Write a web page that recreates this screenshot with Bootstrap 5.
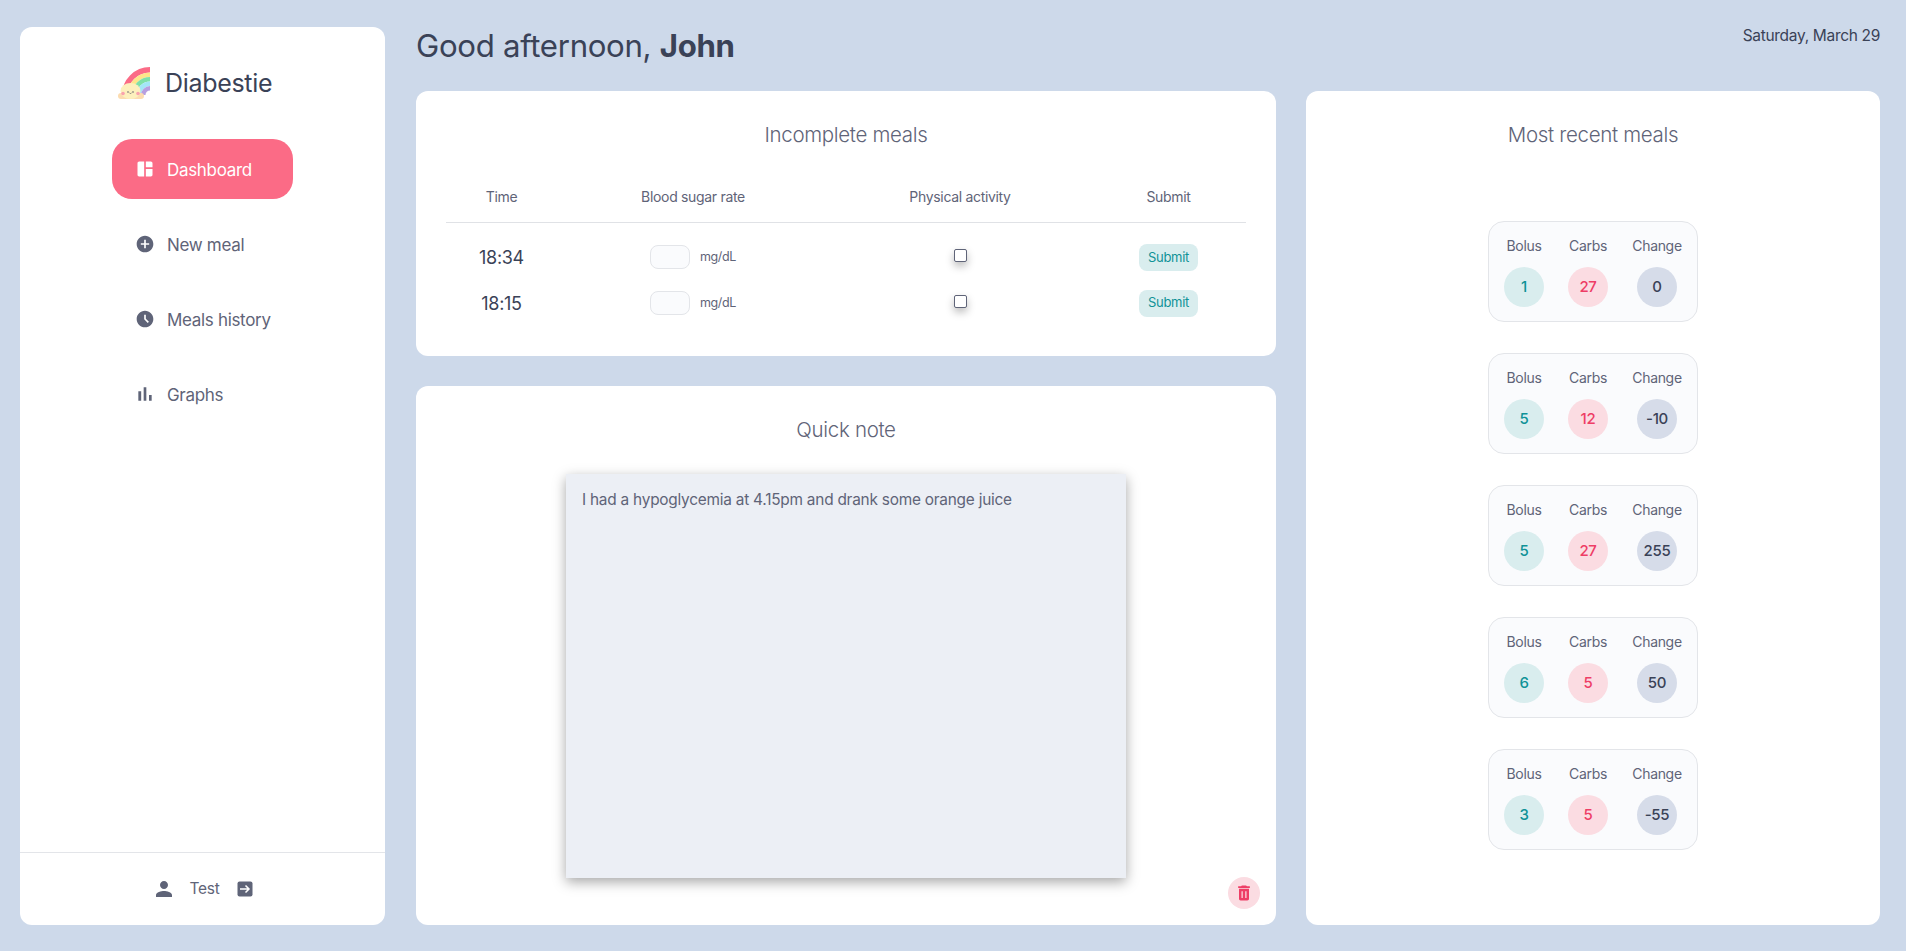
<!DOCTYPE html>
<html lang="en">
  <head>
    <meta charset="UTF-8" />
    <meta name="viewport" content="width=device-width, initial-scale=1.0" />
    <title>Diabestie</title>
    <link
      rel="stylesheet"
      href="https://cdn.jsdelivr.net/npm/bootstrap@5.3.3/dist/css/bootstrap.min.css"
    />
    <style>
      body {
        background: #cdd9ea;
        font-family: "Inter", "Liberation Sans", sans-serif;
        color: #5f6478;
        letter-spacing: -0.02em;
      }
      .page-wrap { height: 951px; padding: 27px 26px 26px 20px; gap: 31px; overflow: hidden; }
      .panel { background: #fff; border-radius: 12px; }
      .side-panel { width: 365px; flex: none; }
      .brand { height: 112px; padding-left: 98px; gap: 15px; color: #3a4257; font-size: 25px; }
      .brand-name { padding-top: 2px; }
      .side-nav { width: 181px; margin-left: 92px; gap: 15px; }
      .side-link { height: 60px; padding-left: 25px; gap: 13px; border-radius: 20px; color: #5f6478; font-size: 17px; text-decoration: none; }
      .side-link.current { background: #fb6b86; color: #fff; }
      .side-link svg { width: 20px; height: 20px; margin-left: -2px; margin-right: -1px; fill: currentColor; flex: none; }
      .side-text { padding-top: 3px; }
      .side-foot { height: 73px; border-top: 1px solid #e3e5e9; font-size: 15.5px; }
      .side-foot svg { fill: #5f6478; flex: none; }
      .foot-user { margin-right: 14px; }
      .foot-exit { margin-left: 18px; }
      .top-bar { height: 64px; }
      .hello { font-size: 31.2px; font-weight: 400; color: #3a4257; margin: 0; line-height: 38px; }
      .hello b { font-weight: 700; }
      .today { font-size: 15.5px; color: #3a4257; line-height: 18px; }
      .main-cols { gap: 30px; min-height: 0; }
      .left-col { width: 860px; flex: none; gap: 30px; }
      .panel-title { font-size: 20.5px; font-weight: 300; text-align: center; margin: 0; color: #5f6478; line-height: 26px; }
      .meals-panel { height: 265px; padding: 31px 30px 0; }
      .meal-table { width: 800px; margin-top: 24px; table-layout: fixed; }
      .meal-table th { font-weight: 400; font-size: 14px; text-align: center; height: 50px; padding: 0; border-bottom: 1px solid #e0e2e6; color: #5f6478; }
      .meal-table td { text-align: center; padding: 0; height: 46px; vertical-align: middle; }
      .meal-table tbody tr:first-child td { height: 58px; padding-top: 12px; }
      .meal-time { font-size: 18px; color: #3a4257; }
      .rate-wrap { gap: 10px; }
      .rate-box { width: 40px; height: 24px; border: 1px solid #e3e5e9; background: #fafbfd; border-radius: 8px; padding: 0; }
      .rate-unit { font-size: 12.5px; color: #5f6478; }
      .meal-table .act-box { display: block; width: 13px; height: 13px; margin: 0 auto 4px; border-radius: 2px; border: 1px solid #5f6478; box-shadow: 0 4px 8px rgba(0,0,0,.28); }
      .send-btn { width: 59px; height: 27px; padding: 0; font-size: 13px; border-radius: 8px; border: 0; background: #d9edee; color: #0f9297; letter-spacing: -0.02em; }
      .note-panel { flex: 1; min-height: 0; padding: 31px 0 0; position: relative; }
      .note-area { display: block; width: 560px; height: 404px; margin: 31px auto 0; background: #eceff5; border: 0; border-radius: 0; resize: none; padding: 15px 16px; font-size: 15.4px; color: #5f6478; box-shadow: 0 4px 12px rgba(0,0,0,.35); letter-spacing: -0.015em; line-height: 22px; }
      .trash-btn { position: absolute; right: 16px; bottom: 16px; width: 32px; height: 32px; border-radius: 50%; background: #fbdce2; border: 0; padding: 0; }
      .trash-btn svg { width: 20px; height: 20px; fill: #ee3e66; }
      .recent-panel { flex: 1; padding: 31px 0 0; }
      .recent-list { gap: 31px; margin-top: 73px; }
      .recent-item { width: 210px; height: 101px; padding: 14px 0 0 0; background: #fafbfd; border: 1px solid #e3e5e9; border-radius: 16px; }
      .recent-cell { font-size: 14px; text-align: center; gap: 11px; color: #5f6478; line-height: 20px; }
      .recent-cell:nth-child(1) { width: 64px; margin-left: 3px; }
      .recent-cell:nth-child(2) { width: 64px; }
      .recent-cell:nth-child(3) { width: 74px; }
      .dot { width: 40px; height: 40px; border-radius: 50%; font-size: 15px; font-weight: 500; }
      .dot-bolus { background: #d9edee; color: #0f9297; }
      .dot-carbs { background: #fbdce2; color: #ee3e66; }
      .dot-change { background: #d6dce9; color: #3a4257; }
    </style>
  </head>
  <body>
    <div class="page-wrap d-flex">
      <aside class="panel side-panel d-flex flex-column">
        <div class="brand d-flex align-items-center">
          <svg width="32" height="32" viewBox="0 0 32 32">
            <g fill="none">
              <path d="M6.750 28A25.250 25.250 0 0 1 32 2.750" stroke="#fb6b86" stroke-width="5.500" />
              <path d="M11.750 28A20.250 20.250 0 0 1 32 7.750" stroke="#fde58a" stroke-width="4.500" />
              <path d="M16.250 28A15.750 15.750 0 0 1 32 12.250" stroke="#7fe0a8" stroke-width="4.500" />
              <path d="M20.750 28A11.250 11.250 0 0 1 32 16.750" stroke="#a3e6f7" stroke-width="4.500" />
              <path d="M25.250 28A6.750 6.750 0 0 1 32 21.250" stroke="#b79fe0" stroke-width="4.500" />
            </g>
            <rect x="0" y="26" width="26" height="6" rx="3" fill="#fcdcb0" />
            <ellipse cx="12.500" cy="24" rx="10" ry="8" fill="#fdf0bd" />
            <circle cx="5" cy="26.500" r="1.800" fill="#f9a3ae" />
            <circle cx="20" cy="26.500" r="1.800" fill="#f9a3ae" />
            <circle cx="10" cy="25" r=".7" fill="#3a4257" />
            <circle cx="15" cy="25" r=".7" fill="#3a4257" />
            <path d="M11.500 26q1 1 2 0" fill="none" stroke="#3a4257" stroke-width=".6" />
          </svg>
          <span class="brand-name">Diabestie</span>
        </div>
        <nav class="side-nav d-flex flex-column">
          <a href="#" class="side-link current d-flex align-items-center">
            <svg viewBox="0 0 24 24"><path d="M11 21H5c-1.100 0-2-.9-2-2V5c0-1.100.9-2 2-2h6v18zm2 0h6c1.100 0 2-.9 2-2v-7h-8v9zm8-11V5c0-1.100-.9-2-2-2h-6v7h8z" /></svg>
            <span class="side-text">Dashboard</span>
          </a>
          <a href="#" class="side-link d-flex align-items-center">
            <svg viewBox="0 0 24 24"><path d="M12 2C6.480 2 2 6.480 2 12s4.480 10 10 10 10-4.480 10-10S17.520 2 12 2zm5 11h-4v4h-2v-4H7v-2h4V7h2v4h4v2z" /></svg>
            <span class="side-text">New meal</span>
          </a>
          <a href="#" class="side-link d-flex align-items-center">
            <svg viewBox="0 0 24 24"><path d="M11.990 2C6.470 2 2 6.480 2 12s4.470 10 9.990 10C17.520 22 22 17.520 22 12S17.520 2 11.990 2zm3.300 14.710L11 12.410V7h2v4.590l3.710 3.710-1.420 1.410z" /></svg>
            <span class="side-text">Meals history</span>
          </a>
          <a href="#" class="side-link d-flex align-items-center">
            <svg viewBox="1.500 1.500 21 21"><path d="M5 9.200h3V19H5zM10.600 5h2.800v14h-2.800zm5.600 8H19v6h-2.800z" /></svg>
            <span class="side-text">Graphs</span>
          </a>
        </nav>
        <div class="side-foot mt-auto d-flex align-items-center justify-content-center">
          <svg class="foot-user" width="24" height="24" viewBox="0 0 24 24"><path d="M12 12c2.210 0 4-1.790 4-4s-1.790-4-4-4-4 1.790-4 4 1.790 4 4 4zm0 2c-2.670 0-8 1.340-8 4v2h16v-2c0-2.660-5.330-4-8-4z" /></svg>
          <span>Test</span>
          <svg class="foot-exit" width="16" height="16" viewBox="0 0 16 16">
            <rect width="15" height="15" x=".5" y=".5" rx="2" />
            <path d="M3 8h9M8.500 4.500 12 8l-3.500 3.500" fill="none" stroke="#fff" stroke-width="1.500" />
          </svg>
        </div>
      </aside>

      <main class="flex-grow-1 d-flex flex-column">
        <header class="top-bar d-flex justify-content-between align-items-start">
          <h1 class="hello">Good afternoon, <b>John</b></h1>
          <div class="today">Saturday, March 29</div>
        </header>
        <div class="main-cols d-flex flex-grow-1">
          <div class="left-col d-flex flex-column">
            <section class="panel meals-panel">
              <h2 class="panel-title">Incomplete meals</h2>
              <table class="meal-table">
                <colgroup>
                  <col style="width: 111px" />
                  <col style="width: 272px" />
                  <col style="width: 262px" />
                  <col style="width: 155px" />
                </colgroup>
                <thead>
                  <tr>
                    <th>Time</th>
                    <th>Blood sugar rate</th>
                    <th>Physical activity</th>
                    <th>Submit</th>
                  </tr>
                </thead>
                <tbody id="meal-rows"></tbody>
              </table>
            </section>
            <section class="panel note-panel">
              <h2 class="panel-title">Quick note</h2>
              <textarea class="note-area form-control">I had a hypoglycemia at 4.15pm and drank some orange juice</textarea>
              <button class="trash-btn d-flex align-items-center justify-content-center" aria-label="Delete note">
                <svg viewBox="0 0 24 24"><path d="M6 19c0 1.100.9 2 2 2h8c1.100 0 2-.9 2-2V7H6v12zm3-9h1.500v8H9zm4.500 0H15v8h-1.500zM19 4h-3.500l-1-1h-5l-1 1H5v2h14V4z" /></svg>
              </button>
            </section>
          </div>
          <section class="panel recent-panel">
            <h2 class="panel-title">Most recent meals</h2>
            <div class="recent-list d-flex flex-column align-items-center" id="recent-list"></div>
          </section>
        </div>
      </main>
    </div>

    <script src="https://cdn.jsdelivr.net/npm/bootstrap@5.3.3/dist/js/bootstrap.bundle.min.js"></script>
    <script>
      let incomplete = ["18:34", "18:15"];
      let recent = [
        { bolus: 1, carbs: 27, change: 0 },
        { bolus: 5, carbs: 12, change: -10 },
        { bolus: 5, carbs: 27, change: 255 },
        { bolus: 6, carbs: 5, change: 50 },
        { bolus: 3, carbs: 5, change: -55 },
      ];

      let mealRows = document.getElementById("meal-rows");
      for (let time of incomplete) {
        mealRows.innerHTML += `
          <tr>
            <td class="meal-time">${time}</td>
            <td>
              <div class="rate-wrap d-flex align-items-center justify-content-center">
                <input class="rate-box" type="text" aria-label="Blood sugar rate" />
                <span class="rate-unit">mg/dL</span>
              </div>
            </td>
            <td><input class="form-check-input act-box" type="checkbox" aria-label="Physical activity" /></td>
            <td><button class="btn send-btn">Submit</button></td>
          </tr>`;
      }

      let recentList = document.getElementById("recent-list");
      for (let meal of recent) {
        recentList.innerHTML += `
          <div class="recent-item d-flex">
            <div class="recent-cell d-flex flex-column align-items-center">Bolus<span class="dot dot-bolus d-flex align-items-center justify-content-center">${meal.bolus}</span></div>
            <div class="recent-cell d-flex flex-column align-items-center">Carbs<span class="dot dot-carbs d-flex align-items-center justify-content-center">${meal.carbs}</span></div>
            <div class="recent-cell d-flex flex-column align-items-center">Change<span class="dot dot-change d-flex align-items-center justify-content-center">${meal.change}</span></div>
          </div>`;
      }
    </script>
  </body>
</html>
